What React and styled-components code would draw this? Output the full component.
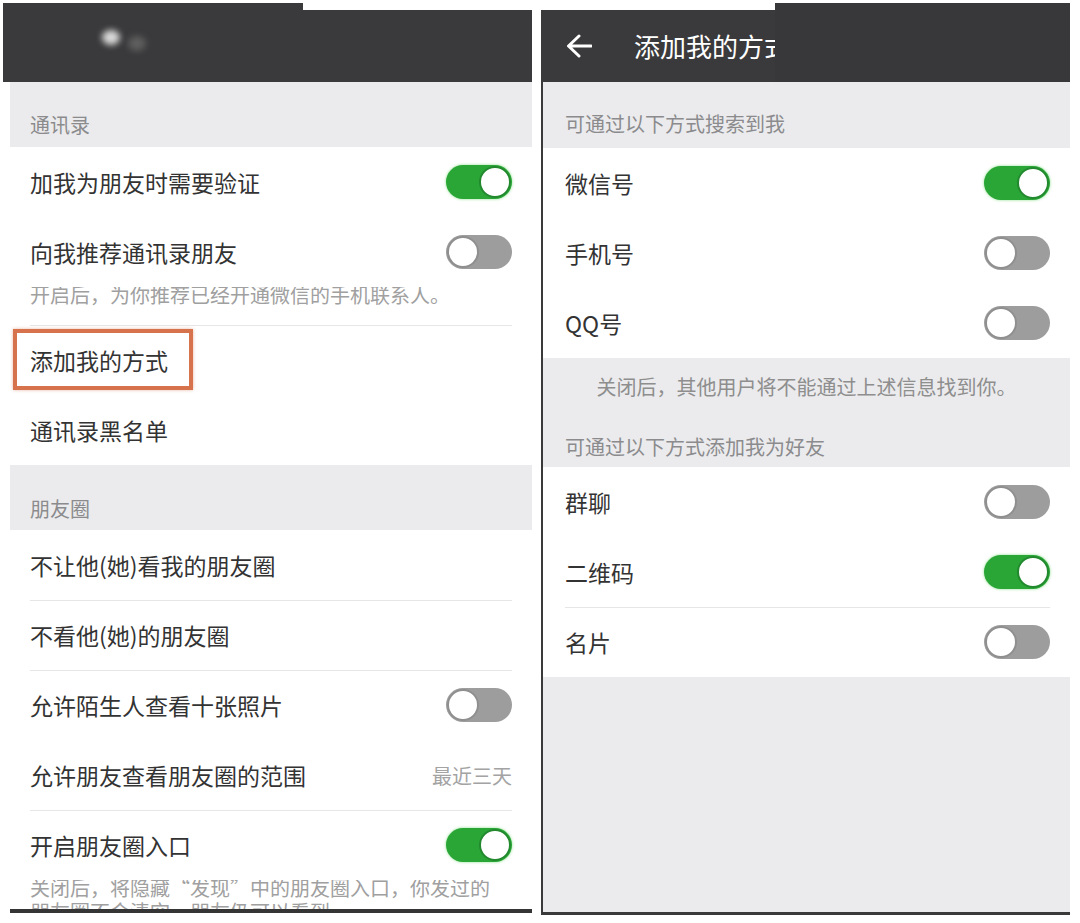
import React from "react";
import styled, { createGlobalStyle } from "styled-components";

const GlobalStyle = createGlobalStyle`
  html, body {
    margin: 0;
    padding: 0;
    background: #ffffff;
  }
  body {
    font-family: "Noto Sans CJK SC", "Noto Sans", sans-serif;
    color: #333333;
  }
`;

const Page = styled.div`
  display: flex;
  align-items: flex-start;
  gap: 9px;
  padding-left: 3px;
  height: 923px;
  overflow: hidden;
  background: #ffffff;
`;

/* 左边的截图 */
const LeftPhone = styled.div`
  width: 529px;
  margin-top: 3px;
  display: flex;
  flex-direction: column;
`;

const RightPhone = styled.div`
  width: 527px;
  height: 902px;
  margin-top: 10px;
  display: flex;
  flex-direction: column;
  border-left: 2px solid #3a3a3a;
  border-bottom: 3px solid #3a3a3a;
  background: #ebebed;
`;

const Header = styled.div`
  position: relative;
  height: ${(p) => p.$height}px;
  flex: none;
  display: flex;
  align-items: center;
  gap: 42px;
  padding-left: 23px;
  background: #3a3a3c;
  color: #ffffff;
`;

/* 截图顶上白色缺口 */
const WhiteNotch = styled.div`
  position: absolute;
  top: 0;
  left: 300px;
  right: 0;
  height: 7px;
  background: #ffffff;
`;

/* 右边标题被遮住的一块 */
const DarkCover = styled.div`
  position: absolute;
  top: -7px;
  left: 232px;
  right: 0;
  bottom: 0;
  background: #38383b;
`;

const BlurName = styled.div`
  display: flex;
  align-items: center;
  gap: 8px;
  margin-left: 76px;
  margin-top: -6px;
`;

const Blob = styled.span`
  display: block;
  width: ${(p) => p.$size}px;
  height: ${(p) => p.$size - 3}px;
  margin-top: ${(p) => p.$offset}px;
  border-radius: 50%;
  background: ${(p) => p.$color};
  filter: blur(3px);
`;

const Title = styled.div`
  font-size: 26px;
  line-height: 30px;
  white-space: nowrap;
`;

const LeftBody = styled.div`
  height: 827px;
  margin-left: 7px;
  overflow: hidden;
  background: #ffffff;
`;

const BottomBar = styled.div`
  height: 4px;
  margin-left: 7px;
  background: #353535;
`;

const Section = styled.div`
  height: ${(p) => p.$height}px;
  display: flex;
  align-items: flex-end;
  padding: 0 0 ${(p) => p.$bottom}px ${(p) => p.$pad}px;
  box-sizing: border-box;
  background: #ebebed;
  color: #8b8b8e;
  font-size: 20px;
  line-height: 24px;
`;

const Row = styled.div`
  position: relative;
  height: 70px;
  display: flex;
  align-items: center;
  justify-content: space-between;
  padding: 0 20px 0 ${(p) => p.$pad}px;
  box-sizing: border-box;
  font-size: 23px;
  color: #333333;
  background: ${(p) =>
    p.$divider
      ? `linear-gradient(#e6e6e6, #e6e6e6) ${p.$pad}px 0 / calc(100% - ${p.$pad + 20}px) 1px no-repeat, #ffffff`
      : "#ffffff"};
`;

const Value = styled.span`
  font-size: 20px;
  color: #a3a3a3;
`;

const Note = styled.div`
  margin-top: -4px;
  padding: 0 20px 18px;
  font-size: 20px;
  line-height: 24px;
  color: #a0a0a0;
  white-space: nowrap;
  background: #ffffff;
`;

const CenterNote = styled.div`
  padding-top: 17px;
  text-align: center;
  font-size: 20px;
  line-height: 24px;
  color: #8e8e8e;
`;

const Highlight = styled.div`
  position: absolute;
  left: 3px;
  top: 4px;
  width: 180px;
  height: 61px;
  box-sizing: border-box;
  border: 4px solid #d6734c;
  box-shadow: 0 0 3px rgba(214, 115, 76, 0.5);
  pointer-events: none;
`;

const Toggle = styled.span`
  position: relative;
  width: 66px;
  height: 34px;
  flex: none;
  border-radius: 17px;
  box-sizing: border-box;
  background: ${(p) => (p.$on ? "#2aa637" : "#9d9d9d")};
  box-shadow: ${(p) => (p.$on ? "0 0 3px rgba(60, 200, 60, 0.6)" : "none")};

  &::after {
    content: "";
    position: absolute;
    top: 1px;
    left: ${(p) => (p.$on ? "33px" : "1px")};
    width: 32px;
    height: 32px;
    box-sizing: border-box;
    border-radius: 50%;
    background: #ffffff;
    border: 2px solid ${(p) => (p.$on ? "#22892e" : "#8f8f8f")};
  }
`;

const RightBody = styled.div`
  flex: 1;
  background: #ebebed;
`;

function BackArrow() {
  return (
    <svg width="26" height="24" viewBox="0 0 26 24" fill="none">
      <path
        d="M25 12H3M13 2L2.5 12L13 22"
        stroke="#ffffff"
        strokeWidth="3"
        strokeLinecap="round"
        strokeLinejoin="round"
      />
    </svg>
  );
}

function Item({ label, toggle, value, divider, pad = 20, children }) {
  return (
    <Row $divider={divider} $pad={pad}>
      <span>{label}</span>
      {toggle !== undefined && <Toggle $on={toggle} />}
      {value && <Value>{value}</Value>}
      {children}
    </Row>
  );
}

export default function App() {
  return (
    <>
      <GlobalStyle />
      <Page>
        <LeftPhone>
          <Header $height={79}>
            <WhiteNotch />
            <BlurName>
              <Blob $size={18} $offset={-4} $color="rgba(235,235,235,0.9)" />
              <Blob $size={18} $offset={8} $color="rgba(110,110,110,0.7)" />
            </BlurName>
          </Header>
          <LeftBody>
            <Section $height={65} $bottom={10} $pad={20}>通讯录</Section>
            <Item label="加我为朋友时需要验证" toggle={true} />
            <Item label="向我推荐通讯录朋友" toggle={false} />
            <Note>开启后，为你推荐已经开通微信的手机联系人。</Note>
            <Item label="添加我的方式" divider>
              <Highlight />
            </Item>
            <Item label="通讯录黑名单" />
            <Section $height={65} $bottom={9} $pad={20}>朋友圈</Section>
            <Item label="不让他(她)看我的朋友圈" />
            <Item label="不看他(她)的朋友圈" divider />
            <Item label="允许陌生人查看十张照片" toggle={false} divider />
            <Item label="允许朋友查看朋友圈的范围" value="最近三天" />
            <Item label="开启朋友圈入口" toggle={true} divider />
            <Note>
              关闭后，将隐藏“发现”中的朋友圈入口，你发过的
              <br />
              朋友圈不会清空，朋友仍可以看到。
            </Note>
          </LeftBody>
          <BottomBar />
        </LeftPhone>

        <RightPhone>
          <Header $height={72}>
            <BackArrow />
            <Title>添加我的方式</Title>
            <DarkCover />
          </Header>
          <RightBody>
            <Section $height={66} $bottom={12} $pad={22}>可通过以下方式搜索到我</Section>
            <Item label="微信号" toggle={true} pad={22} />
            <Item label="手机号" toggle={false} pad={22} />
            <Item label="QQ号" toggle={false} pad={22} />
            <CenterNote>关闭后，其他用户将不能通过上述信息找到你。</CenterNote>
            <Section $height={68} $bottom={8} $pad={22}>可通过以下方式添加我为好友</Section>
            <Item label="群聊" toggle={false} pad={22} />
            <Item label="二维码" toggle={true} pad={22} />
            <Item label="名片" toggle={false} pad={22} divider />
          </RightBody>
        </RightPhone>
      </Page>
    </>
  );
}
